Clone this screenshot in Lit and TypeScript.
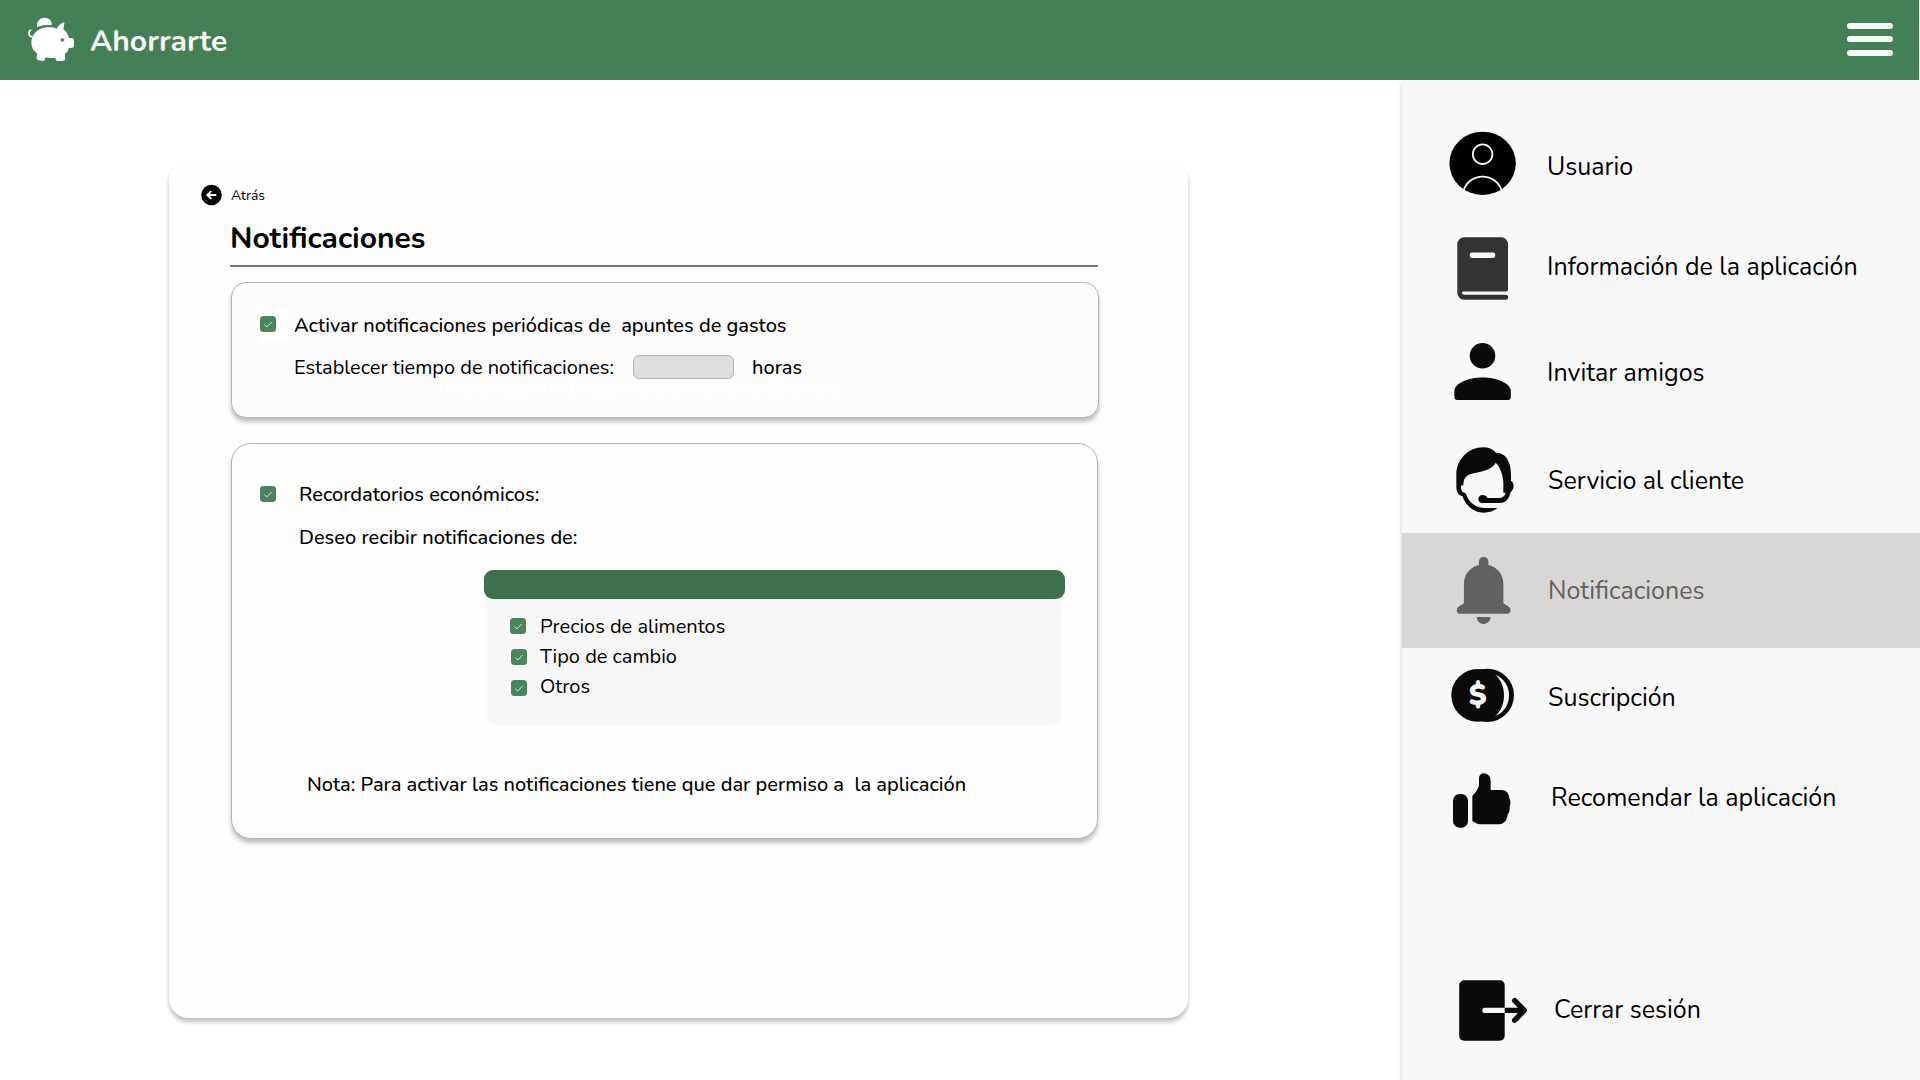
import { LitElement, html, css, svg } from "lit";
import { customElement } from "lit/decorators.js";

const icons = {
  user: svg`<ellipse cx="42.6" cy="48.3" rx="33.2" ry="31.6" fill="#000"/>
    <circle cx="42.6" cy="39.2" r="9.8" fill="none" stroke="#f8f8f8" stroke-width="1.8"/>
    <path d="M23.7 75.2A19.9 19.9 0 0 1 61.5 75.2" fill="none" stroke="#f8f8f8" stroke-width="1.8"/>`,
  book: svg`<path fill="#333" d="M24.3 22.2H61a7 7 0 0 1 7 7V74.5a2 2 0 0 1-2 2H23.5q-1.6 0-1.5 1.5q.1 1.8 2.5 1.8H65.6a2.5 2.5 0 0 1 0 5H24.3a7 7 0 0 1-7-7V29.2a7 7 0 0 1 7-7z"/>
    <rect x="29.8" y="37.4" width="25.4" height="5.6" rx="2" fill="#f8f8f8"/>`,
  person: svg`<circle cx="42.5" cy="35.7" r="12.8"/>
    <path d="M14.4 77V70.5C15 63.5 28 57.6 42.5 57.6S70 63.5 70.8 70.5V77a3 3 0 0 1-3 3H17.4a3 3 0 0 1-3-3z"/>`,
  support: svg`<path transform="translate(0 15) scale(.33333)" d="M168 38C158 27 145 22 130 22C85 22 49 58 49 105V140C49 155 55 166 67 168C78 198 102 218 130 218C148 218 162 213 172 204H140C110 206 88 190 78 162C76 158 72 158 68 156C63 152 62 140 64 136H70C70 120 76 108 90 103C110 97 130 96 145 88C155 83 163 76 167 68C178 78 188 100 190 125V158H197C194 168 188 173 180 174H143C140 168 134 165 128 165C120 165 115 171 115 177C115 184 120 189 128 189H180C197 189 208 175 211 158C217 152 221 145 221 138C221 131 218 125 213 122V105C213 60 195 38 168 38Z"/>`,
  bell: svg`<path d="M43.6 24c2.8 0 4.8 2 4.8 4.8V32c9 2 15 9.5 15 19V70.3l5 3.2c3.5 2.5 2.5 7.2-.8 7.2H19.7c-3.3 0-4.3-4.7-.8-7.2l5-3.2V51c0-9.5 6-17 15-19V28.8c0-2.8 2-4.8 4.7-4.8z"/>
    <path d="M36.8 84H50.4c0 4-3 7-6.8 7s-6.8-3-6.8-7z"/>`,
  coins: svg`<circle cx="37.7" cy="47.3" r="26.4"/><circle cx="47.4" cy="47.3" r="26.6"/>
    <path fill="#f8f8f8" d="M55 26.7C73.8 33.5 73.8 61.3 55 68C67 59 67 35.7 55 26.7z"/>
    <text x="37.6" y="57.2" text-anchor="middle" class="coin" fill="#f8f8f8">$</text>`,
  thumb: svg`<g transform="translate(0 -90) scale(.33333)"><rect x="39" y="402" width="45" height="101" rx="20"/>
    <path d="M97 408C108 395 117 385 117 372V357C117 346 123 340 132 340C145 340 152 352 152 365V390H185C198 390 207 400 207 412C212 420 213 432 209 440C210 450 208 458 203 463C202 480 192 493 178 493H122C110 493 103 486 97 482Z"/></g>`,
  exit: svg`<rect x="19.2" y="20.3" width="45.5" height="60.5" rx="5"/>
    <path d="M64.7 50.4H84M74.7 40.7L84.3 50.4L74.7 60.2" fill="none" stroke="#0a0a0a" stroke-width="5.4" stroke-linecap="round" stroke-linejoin="round"/>
    <path d="M64.7 47.7H45a2.7 2.7 0 0 0 0 5.4H64.7z" fill="#f8f8f8"/>`,
};

const items: { id: string; label: string; h: number; icon: unknown }[] = [
  { id: "user", label: "Usuario", h: 100, icon: icons.user },
  { id: "info", label: "Información de la aplicación", h: 105, icon: icons.book },
  { id: "invite", label: "Invitar amigos", h: 105, icon: icons.person },
  { id: "support", label: "Servicio al cliente", h: 108, icon: icons.support },
  { id: "notif", label: "Notificaciones", h: 115, icon: icons.bell },
  { id: "subs", label: "Suscripción", h: 102, icon: icons.coins },
  { id: "rate", label: "Recomendar la aplicación", h: 100, icon: icons.thumb },
  { id: "exit", label: "Cerrar sesión", h: 100, icon: icons.exit },
];

@customElement("side-menu")
class SideMenu extends LitElement {
  static styles = css`
    :host { display: flex; flex-direction: column; box-sizing: border-box; width: 518px; height: 1000px; padding-top: 35px; background: #f8f8f8; box-shadow: 0 4px 4px rgba(0, 0, 0, .25); }
    .row { display: flex; align-items: flex-start; padding-left: 38px; color: #000; }
    .icon { display: block; flex: none; fill: #0a0a0a; }
    .label { font-size: 25px; line-height: 30px; white-space: nowrap; }
    .coin { font: 900 29px Nunito, Lato, sans-serif; }
    .user .label, .info .label { padding: 37px 0 0 7px; }
    .invite .label { padding: 38px 0 0 7px; }
    .support .label { padding: 41px 0 0 8px; }
    .notif { background: #d8d7d5; color: #62615f; }
    .notif .icon { fill: #62615f; }
    .notif .label { padding: 43px 0 0 8px; }
    .subs .label { padding: 35px 0 0 8px; }
    .rate .label { padding: 33px 0 0 11px; }
    .exit { margin-top: 110px; }
    .exit .label { padding: 35px 0 0 14px; }
  `;
  render() {
    return items.map((i) => html`<div class="row ${i.id}">
      <svg class="icon" width="100" height=${i.h} viewBox="0 0 100 ${i.h}">${i.icon}</svg>
      <span class="label">${i.label}</span>
    </div>`);
  }
}

@customElement("check-box")
class CheckBox extends LitElement {
  static styles = css`:host { display: block; flex: none; width: 16px; height: 16px; } svg { display: block; }`;
  render() {
    return html`<svg width="16" height="16" viewBox="0 0 16 16"><rect width="16" height="16" rx="3.5" fill="#4a865b"/><path d="M4.4 8.7L6.9 10.9L11.7 6" fill="none" stroke="#e6efe8" stroke-width=".9"/></svg>`;
  }
}

@customElement("app-root")
class AppRoot extends LitElement {
  static styles = css`
    :host { display: block; width: 1920px; height: 1080px; overflow: hidden; background: #fff; color: #000; font-family: Nunito, Lato, sans-serif; }
    .top { display: flex; align-items: flex-start; box-sizing: border-box; width: 1919px; height: 80px; padding: 10px 26px 0 20px; background: #438055; position: relative; z-index: 1; }
    .brand { margin: 14px 0 0 6px; flex: 1; font-size: 30px; line-height: 36px; font-weight: 700; color: #f8f8f8; }
    .burger { display: block; margin-top: 13px; }
    .body { display: flex; justify-content: space-between; height: 1000px; }
    .panel { box-sizing: border-box; width: 1019px; height: 858px; margin: 80px 0 0 169px; padding-top: 24px; border-radius: 20px; background: #fefefe; box-shadow: 0 4px 4px rgba(0, 0, 0, .25); }
    .back { display: flex; align-items: flex-start; height: 22px; padding-left: 32px; font-size: 14px; line-height: 18px; }
    .back-label { margin: 3px 0 0 9px; }
    .title { margin: 15px 0 0 61px; font-size: 30px; line-height: 36px; font-weight: 700; }
    .rule { width: 868px; height: 2px; margin: 8px 0 0 61px; background: #777; }
    .card { box-sizing: border-box; border: 1px solid #b5b5b5; margin-left: 62px; box-shadow: 0 4px 4px rgba(0, 0, 0, .25); font-size: 20px; line-height: 24px; white-space: nowrap; }
    .periodic { width: 868px; height: 136px; margin-top: 15px; padding: 25px 0 0 28px; border-radius: 15px; background: #fcfcfc; }
    .economic { width: 867px; height: 396px; margin-top: 25px; padding-top: 39px; border-radius: 20px; background: #fefefe; }
    .medium { font-weight: 500; }
    .line { display: flex; align-items: flex-start; }
    .tile { width: 27px; height: 25px; padding-top: 8px; background: #fff; }
    .activate { margin: 6px 0 0 7px; white-space: pre; }
    .time { margin: 15px 0 0 34px; }
    .hours { position: relative; z-index: 1; box-sizing: border-box; width: 101px; height: 24px; margin: -1px 18px 0 19px; border: 1px solid #b5b5b5; border-radius: 6px; background: #dedede; }
    .link { margin: -2px 0 0 178px; line-height: 20px; color: #fff; }
    .remind { height: 24px; gap: 23px; padding-left: 28px; }
    .remind check-box { margin-top: 3px; }
    .wish { margin: 19px 0 0 67px; }
    .bar { position: relative; width: 581px; height: 29px; margin: 20px 0 0 252px; border-radius: 9px; background: #3f704d; }
    .list { display: flex; flex-direction: column; gap: 6px; box-sizing: border-box; width: 575px; height: 136px; margin: -10px 0 0 255px; padding: 26px 0 0 24px; border-radius: 10px; background: #f7f7f7; }
    .opt { height: 24px; gap: 13px; }
    .first { gap: 14px; margin-left: -1px; }
    .opt check-box { margin-top: 4px; }
    .first check-box { margin-top: 3px; }
    .last check-box { margin-top: 5px; }
    .note { margin: 48px 0 0 75px; white-space: pre; }
  `;
  render() {
    return html`
      <header class="top">
        <svg width="64" height="60" viewBox="0 0 192 180" fill="#fff">
          <path d="M34 97C34 72 55 53 82 52C93 51 101 52 110 56C115 48 122 39 131 37C133 37 134 39 133 41L130 57C138 63 144 72 147 84L158 85Q162 86 162 90V108Q162 112 158 113L147 114C144 124 140 128 134 133L136 147Q135 153 126 153H112Q106 152 106 143Q88 145 76 142L75 149Q73 154 66 153L54 150Q48 148 50 142L52 131C40 124 34 112 34 97Z"/>
          <path d="M51 51C50 33 60 23 74 23C88 23 97 34 95 45C80 44 65 46 51 51Z"/>
          <path d="M34 60C24 62 24 79 37 81" fill="none" stroke="#fff" stroke-width="5"/>
          <path d="M50 54.500C65 48.500 80 47 97 48" fill="none" stroke="#438055" stroke-width="5"/>
          <circle cx="127" cy="90" r="5.5" fill="#438055"/>
        </svg>
        <span class="brand">Ahorrarte</span>
        <svg class="burger" width="46" height="34" fill="#f8f8f8"><rect width="46" height="6" rx="3"/><rect y="13" width="46" height="6" rx="3"/><rect y="27" width="46" height="6" rx="3"/></svg>
      </header>
      <div class="body">
        <main class="panel">
          <div class="back">
            <svg width="21" height="22" viewBox="0 0 21 22"><circle cx="10.5" cy="11" r="10.3"/><path d="M15.3 11H6.4M10.3 7.1L6.3 11L10.3 14.9" fill="none" stroke="#fff" stroke-width="1.9"/></svg>
            <span class="back-label">Atrás</span>
          </div>
          <div class="title">Notificaciones</div>
          <div class="rule"></div>
          <section class="card periodic">
            <div class="line"><div class="tile"><check-box></check-box></div><span class="activate medium">Activar notificaciones periódicas de  apuntes de gastos</span></div>
            <div class="line time"><span>Establecer tiempo de notificaciones:</span><div class="hours"></div><span class="medium">horas</span></div>
            <div class="link">https://usuario1/recomendar/xbeowo19/share</div>
          </section>
          <section class="card economic">
            <div class="line remind"><check-box></check-box><span class="medium">Recordatorios económicos:</span></div>
            <div class="wish medium">Deseo recibir notificaciones de:</div>
            <div class="bar"></div>
            <div class="list">
              <div class="line opt first"><check-box></check-box><span>Precios de alimentos</span></div>
              <div class="line opt"><check-box></check-box><span>Tipo de cambio</span></div>
              <div class="line opt last"><check-box></check-box><span>Otros</span></div>
            </div>
            <div class="note medium">Nota: Para activar las notificaciones tiene que dar permiso a  la aplicación</div>
          </section>
        </main>
        <side-menu></side-menu>
      </div>`;
  }
}
